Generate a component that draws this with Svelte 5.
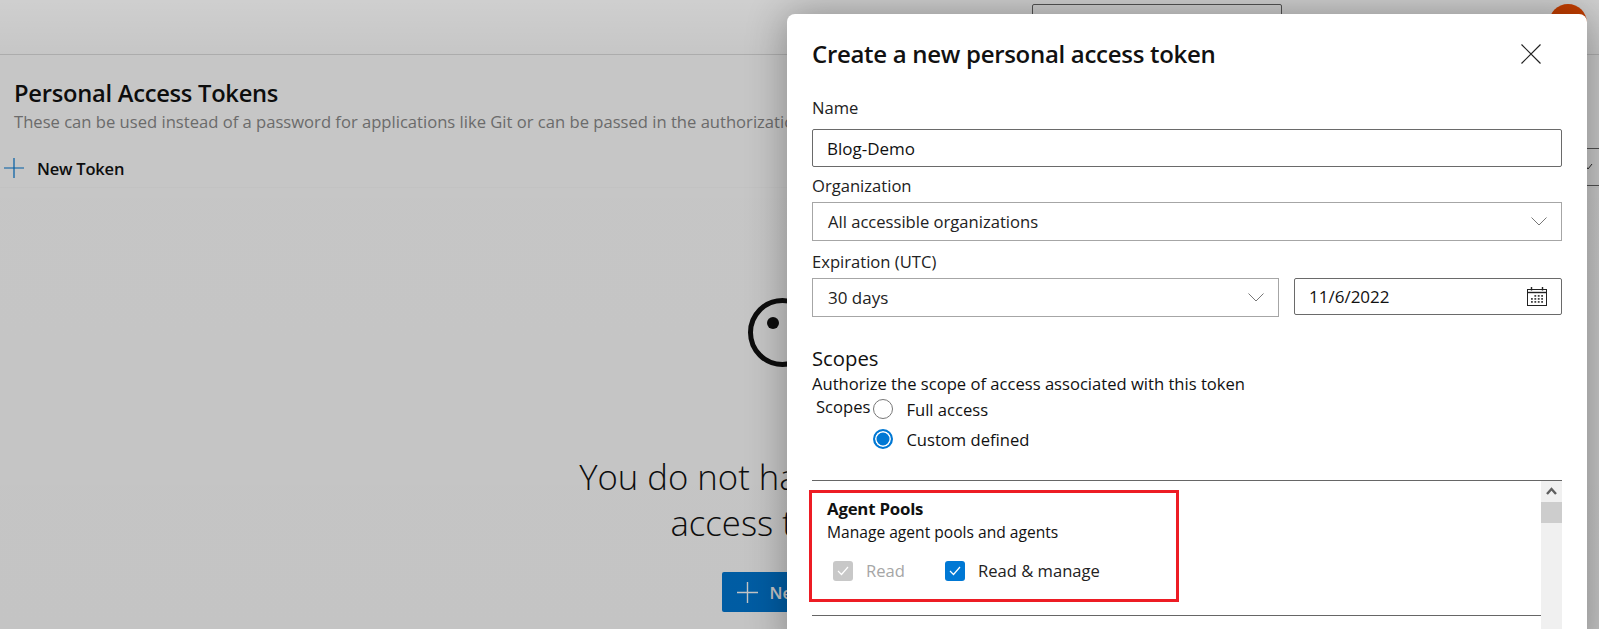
<script>
  let name = 'Blog-Demo';
  const calendarCells = [];
  for (let r = 0; r < 3; r++) {
    for (let c = 0; c < 4; c++) {
      if (r === 0 && c === 0) continue;
      calendarCells.push({ x: 4 + c * 3.4, y: 8 + r * 3 });
    }
  }
</script>

<div class="page">
  <header class="topbar">
    <div class="search"></div>
    <div class="avatar"></div>
  </header>

  <section class="tokens-head">
    <h1>Personal Access Tokens</h1>
    <p>These can be used instead of a password for applications like Git or can be passed in the authorization header</p>
  </section>

  <div class="toolbar">
    <button class="new-token">
      <svg width="20" height="20" viewBox="0 0 20 20"><path d="M10 0V20M0 10H20" stroke="#0078d4" stroke-width="1.2" fill="none" /></svg>
      New Token
    </button>
    <div class="filter">
      <svg width="10" height="8" viewBox="0 0 10 8"><path d="M0 1L4 6L8 1" stroke="#333" stroke-width="1" fill="none" /></svg>
    </div>
  </div>

  <section class="empty">
    <svg class="sad" width="69" height="69" viewBox="0 0 69 69">
      <circle cx="34.5" cy="34.5" r="32" stroke="#111" stroke-width="5" fill="none" />
      <circle cx="25" cy="25" r="6" fill="#111" />
    </svg>
    <h2>You do not have any personal<br />access tokens yet.</h2>
    <button class="primary">
      <svg width="21" height="21" viewBox="0 0 21 21"><path d="M10.5 0V21M0 10.5H21" stroke="#fff" stroke-width="1.4" fill="none" /></svg>
      New
    </button>
  </section>

  <div class="scrim"></div>

  <div class="modal">
    <div class="modal-head">
      <h3>Create a new personal access token</h3>
      <svg class="close" width="20" height="20" viewBox="0 0 20 20"><path d="M0.5 0.5L19.5 19.5M19.5 0.5L0.5 19.5" stroke="#222" stroke-width="1.2" fill="none" /></svg>
    </div>

    <label class="field-label first" for="tok-name">Name</label>
    <input id="tok-name" class="text-input" bind:value={name} />

    <div class="field-label">Organization</div>
    <div class="select">
      <span>All accessible organizations</span>
      <svg width="16" height="9" viewBox="0 0 16 9"><path d="M0.5 0.5L8 8L15.5 0.5" stroke="#777" stroke-width="1" fill="none" /></svg>
    </div>

    <div class="field-label exp">Expiration (UTC)</div>
    <div class="expiry">
      <div class="select days">
        <span>30 days</span>
        <svg width="16" height="9" viewBox="0 0 16 9"><path d="M0.5 0.5L8 8L15.5 0.5" stroke="#777" stroke-width="1" fill="none" /></svg>
      </div>
      <div class="date">
        <span>11/6/2022</span>
        <svg width="20" height="19" viewBox="0 0 20 19">
          <rect x="0.5" y="2.5" width="19" height="16" fill="none" stroke="#222" />
          <path d="M0.5 5.5H19.5" stroke="#222" stroke-width="1.4" />
          <path d="M4.5 0V3.5M15.5 0V3.5" stroke="#222" stroke-width="1.4" />
          {#each calendarCells as cell}
            <rect x={cell.x} y={cell.y} width="1.8" height="1.8" fill="#444" />
          {/each}
        </svg>
      </div>
    </div>

    <h4>Scopes</h4>
    <div class="authorize">Authorize the scope of access associated with this token</div>

    <div class="radio-group">
      <span class="radio-label">Scopes</span>
      <div class="radios">
        <div class="radio-row"><span class="radio"></span>Full access</div>
        <div class="radio-row"><span class="radio checked"></span>Custom defined</div>
      </div>
    </div>

    <div class="scope-list">
      <div class="scope-items">
        <div class="scope-item">
          <div class="scope-name">Agent Pools</div>
          <div class="scope-desc">Manage agent pools and agents</div>
          <div class="checks">
            <div class="check disabled">
              <span class="box"><svg width="12" height="10" viewBox="0 0 12 10"><path d="M1 5L4.5 8.5L11 1" stroke="#fff" stroke-width="1.2" fill="none" /></svg></span>
              Read
            </div>
            <div class="check">
              <span class="box"><svg width="12" height="10" viewBox="0 0 12 10"><path d="M1 5L4.5 8.5L11 1" stroke="#fff" stroke-width="1.2" fill="none" /></svg></span>
              Read &amp; manage
            </div>
          </div>
        </div>
      </div>
      <div class="scrollbar">
        <svg class="arrow" width="11" height="8" viewBox="0 0 11 8"><path d="M1 7L5.5 2L10 7" stroke="#606060" stroke-width="2.4" fill="none" /></svg>
        <div class="thumb"></div>
      </div>
      <!-- red annotation drawn on the screenshot -->
      <div class="callout"></div>
    </div>
  </div>
</div>

<style>
  :global(body) {
    margin: 0;
    background: #fff;
    font-family: "Open Sans", "Noto Sans", sans-serif;
  }

  .page {
    position: relative;
    width: 1599px;
    height: 629px;
    overflow: hidden;
    color: #111;
  }

  .topbar {
    height: 55px;
    box-sizing: border-box;
    padding: 4px 12px 0 0;
    display: flex;
    justify-content: flex-end;
    align-items: flex-start;
    border-bottom: 1px solid #ddd;
  }
  .search {
    width: 250px;
    height: 34px;
    box-sizing: border-box;
    border: 1px solid #666;
    border-radius: 2px;
    margin-right: 267px;
  }
  .avatar {
    width: 38px;
    height: 38px;
    border-radius: 50%;
    background: #f04c00;
  }

  .tokens-head {
    padding: 23px 0 0 14px;
    height: 92px;
    box-sizing: border-box;
  }
  h1 {
    margin: 0;
    font-size: 23.7px;
    line-height: 30px;
    font-weight: 600;
    letter-spacing: -0.25px;
  }
  .tokens-head p {
    margin: 3px 0 0;
    font-size: 16.6px;
    line-height: 22px;
    color: #8a8a8a;
    white-space: nowrap;
  }

  .toolbar {
    height: 40px;
    display: flex;
    align-items: center;
    justify-content: space-between;
    border-bottom: 1px solid #fbfbfb;
  }
  .new-token {
    display: flex;
    align-items: center;
    gap: 13px;
    padding: 0 0 0 4px;
    margin-top: 2px;
    border: 0;
    background: none;
    font: 600 16.5px "Open Sans", sans-serif;
    letter-spacing: -0.2px;
    color: #111;
  }
  .filter {
    width: 300px;
    height: 38px;
    box-sizing: border-box;
    border-top: 1px solid #666;
    border-bottom: 1px solid #666;
    display: flex;
    align-items: center;
    justify-content: flex-end;
    padding-right: 5px;
  }

  .empty {
    display: flex;
    flex-direction: column;
    align-items: center;
    padding: 110px 34px 0 0;
  }
  .sad {
    display: block;
  }
  .empty h2 {
    margin: 87px 0 0 56px;
    font-size: 34.7px;
    line-height: 46px;
    font-weight: 300;
    text-align: center;
    white-space: nowrap;
  }
  .primary {
    margin-top: 26px;
    width: 122px;
    height: 40px;
    border: 0;
    border-radius: 2px;
    background: #0078d4;
    color: #fff;
    display: flex;
    align-items: center;
    gap: 12px;
    padding: 0 0 0 15px;
    font: 600 16.5px "Open Sans", sans-serif;
    white-space: nowrap;
  }
  .primary svg {
    flex: none;
  }

  .scrim {
    position: absolute;
    inset: 0;
    background: linear-gradient(rgba(0, 0, 0, 0.19), rgba(0, 0, 0, 0.225) 54px, rgba(0, 0, 0, 0.23));
  }

  .modal {
    position: absolute;
    left: 787px;
    top: 14px;
    width: 800px;
    height: 640px;
    box-sizing: border-box;
    padding: 0 25px;
    background: #fff;
    border-radius: 8px;
    box-shadow: 0 0 40px rgba(0, 0, 0, 0.32);
  }

  .modal-head {
    display: flex;
    justify-content: space-between;
    align-items: center;
    height: 40px;
    padding-top: 20px;
  }
  h3 {
    margin: 0;
    font-size: 24px;
    font-weight: 600;
    letter-spacing: -0.3px;
    line-height: 40px;
  }
  .close {
    margin-right: 21px;
  }

  .field-label {
    font-size: 16.6px;
    line-height: 22px;
    height: 22px;
    margin-top: 8px;
    margin-bottom: 5px;
    color: #222;
  }
  .field-label.first {
    display: block;
    margin-top: 23px;
    margin-bottom: 10px;
  }
  .field-label.exp {
    margin-top: 10px;
  }

  .text-input {
    display: block;
    width: 100%;
    height: 38px;
    box-sizing: border-box;
    border: 1px solid #6a6a6a;
    border-radius: 2px;
    padding: 0 14px;
    font: 17px "Open Sans", sans-serif;
    color: #111;
    outline: none;
  }

  .select {
    height: 39px;
    box-sizing: border-box;
    border: 1px solid #a6a6a6;
    padding: 0 14px 0 15px;
    display: flex;
    align-items: center;
    justify-content: space-between;
    font-size: 16.6px;
    color: #222;
  }

  .expiry {
    display: flex;
    align-items: flex-start;
    gap: 15px;
  }
  .days {
    width: 467px;
    padding-right: 14px;
    font-size: 17px;
  }
  .date {
    flex: 1;
    height: 37px;
    box-sizing: border-box;
    border: 1px solid #6a6a6a;
    border-radius: 2px;
    padding: 0 14px 0 14px;
    display: flex;
    align-items: center;
    justify-content: space-between;
    font-size: 17px;
  }

  h4 {
    margin: 27px 0 0;
    font-size: 20.3px;
    line-height: 29px;
    font-weight: 400;
  }
  .authorize {
    font-size: 16.6px;
    line-height: 22px;
    white-space: nowrap;
  }

  .radio-group {
    display: flex;
    align-items: flex-start;
    height: 86px;
    margin-top: -1px;
  }
  .radio-label {
    font-size: 16.6px;
    line-height: 22px;
    margin: 2px 3px 0 4px;
  }
  .radio-row {
    display: flex;
    align-items: center;
    gap: 13px;
    height: 30px;
    font-size: 16.6px;
  }
  .radio {
    width: 20px;
    height: 20px;
    box-sizing: border-box;
    border: 1px solid #777;
    border-radius: 50%;
    background: #fff;
  }
  .radio.checked {
    border: 2px solid #0078d4;
    background: #0078d4;
    box-shadow: inset 0 0 0 1.5px #fff;
  }

  .scope-list {
    position: relative;
    display: flex;
    height: 170px;
    border-top: 1px solid #666;
  }
  .scope-items {
    flex: 1;
  }
  .scope-item {
    height: 135px;
    box-sizing: border-box;
    padding: 17px 0 0 15px;
    border-bottom: 1px solid #666;
  }
  .scope-name {
    font-size: 16.8px;
    line-height: 22px;
    font-weight: 700;
    letter-spacing: -0.2px;
  }
  .scope-desc {
    font-size: 15.6px;
    line-height: 22px;
    margin-top: 1px;
  }
  .checks {
    display: flex;
    gap: 40px;
    margin: 18px 0 0 6px;
  }
  .check {
    display: flex;
    align-items: center;
    gap: 13px;
    font-size: 16.6px;
    line-height: 20px;
    color: #222;
  }
  .check.disabled {
    color: #a6a6a6;
  }
  .box {
    width: 20px;
    height: 20px;
    border-radius: 3px;
    background: #0078d4;
    display: flex;
    align-items: center;
    justify-content: center;
  }
  .check.disabled .box {
    background: #c8c8c8;
  }

  .scrollbar {
    width: 21px;
    background: #f0f0f0;
    display: flex;
    flex-direction: column;
    align-items: center;
  }
  .arrow {
    margin-top: 6px;
    margin-bottom: 7px;
  }
  .thumb {
    align-self: stretch;
    height: 21px;
    background: #cdcdcd;
  }

  .callout {
    position: absolute;
    left: -3px;
    top: 9px;
    width: 370px;
    height: 112px;
    box-sizing: border-box;
    border: 3px solid #ed1c24;
  }
</style>
